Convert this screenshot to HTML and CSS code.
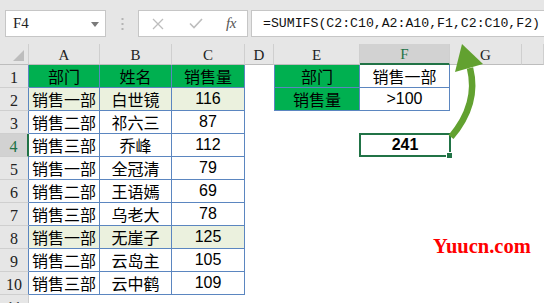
FILE: index.html
```html
<!DOCTYPE html>
<html lang="zh-CN">
<head>
    <meta charset="UTF-8">
    <title>SUMIFS</title>
    <link rel="stylesheet" href="styles.css">
</head>
<body>

    <!-- name box + formula bar -->
    <div class="topbar">
        <div class="name-box">
            <span>F4</span>
            <svg class="caret" width="8" height="5" viewBox="0 0 8 5"><polygon points="0,0 8,0 4,5" fill="#7a7a7a"/></svg>
        </div>
        <svg class="grip" width="3" height="12" viewBox="0 0 3 12">
            <rect x="0.5" y="0" width="2" height="2" fill="#b4b4b4"/>
            <rect x="0.5" y="5" width="2" height="2" fill="#b4b4b4"/>
            <rect x="0.5" y="10" width="2" height="2" fill="#b4b4b4"/>
        </svg>
        <div class="fx-buttons">
            <svg width="12" height="12" viewBox="0 0 12 12"><path d="M1 1L11 11M11 1L1 11" stroke="#bdbdbd" stroke-width="1.3" fill="none"/></svg>
            <svg width="14" height="11" viewBox="0 0 14 11"><path d="M1 5.5L5 9.5L13 1" stroke="#bdbdbd" stroke-width="1.6" fill="none"/></svg>
            <span class="fx">fx</span>
        </div>
        <div class="formula">=SUMIFS(C2:C10,A2:A10,F1,C2:C10,F2)</div>
    </div>

    <div class="sheet">
        <div class="hdr corner"><svg width="11" height="11" viewBox="0 0 11 11"><polygon points="11,0 11,11 0,11" fill="#bdbdbd"/></svg></div>
        <div class="hdr">A</div>
        <div class="hdr">B</div>
        <div class="hdr">C</div>
        <div class="hdr">D</div>
        <div class="hdr">E</div>
        <div class="hdr sel">F</div>
        <div class="hdr">G</div>
        <div class="hdr"></div>

        <div class="rh in">1</div>
        <div class="c t g">部门</div><div class="c t g">姓名</div><div class="c t g">销售量</div>
        <div class="c"></div>
        <div class="c t g edge">部门</div><div class="c t">销售一部</div>
        <div class="c"></div><div class="c"></div>

        <div class="rh in">2</div>
        <div class="c t hl">销售一部</div><div class="c t hl">白世镜</div><div class="c t hl">116</div>
        <div class="c"></div>
        <div class="c t g edge">销售量</div><div class="c t">&gt;100</div>
        <div class="c"></div><div class="c"></div>

        <div class="rh in">3</div>
        <div class="c t">销售二部</div><div class="c t">祁六三</div><div class="c t">87</div>
        <div class="c"></div><div class="c"></div><div class="c"></div><div class="c"></div><div class="c"></div>

        <div class="rh in sel">4</div>
        <div class="c t">销售三部</div><div class="c t">乔峰</div><div class="c t">112</div>
        <div class="c"></div><div class="c"></div>
        <div class="c active">241</div>
        <div class="c"></div><div class="c"></div>

        <div class="rh in">5</div>
        <div class="c t">销售一部</div><div class="c t">全冠清</div><div class="c t">79</div>
        <div class="c"></div><div class="c"></div><div class="c"></div><div class="c"></div><div class="c"></div>

        <div class="rh in">6</div>
        <div class="c t">销售二部</div><div class="c t">王语嫣</div><div class="c t">69</div>
        <div class="c"></div><div class="c"></div><div class="c"></div><div class="c"></div><div class="c"></div>

        <div class="rh in">7</div>
        <div class="c t">销售三部</div><div class="c t">乌老大</div><div class="c t">78</div>
        <div class="c"></div><div class="c"></div><div class="c"></div><div class="c"></div><div class="c"></div>

        <div class="rh in">8</div>
        <div class="c t hl">销售一部</div><div class="c t hl">无崖子</div><div class="c t hl">125</div>
        <div class="c"></div><div class="c"></div><div class="c"></div><div class="c"></div><div class="c"></div>

        <div class="rh in">9</div>
        <div class="c t">销售二部</div><div class="c t">云岛主</div><div class="c t">105</div>
        <div class="c"></div><div class="c"></div><div class="c"></div><div class="c"></div><div class="c"></div>

        <div class="rh in">10</div>
        <div class="c t">销售三部</div><div class="c t">云中鹤</div><div class="c t">109</div>
        <div class="c"></div><div class="c"></div><div class="c"></div><div class="c"></div><div class="c"></div>

        <div class="rh last">11</div>
        <div class="c"></div><div class="c"></div><div class="c"></div><div class="c"></div>
        <div class="c"></div><div class="c"></div><div class="c"></div><div class="c"></div>
    </div>

    <!-- green arrow from F4 up to the formula -->
    <svg class="arrow" width="544" height="303" viewBox="0 0 544 303">
        <path d="M451 137 Q479 104 470 68" stroke="#62a130" stroke-width="6.5" fill="none"/>
        <polygon points="462,44 455,72 483,64" fill="#62a130"/>
    </svg>

    <div class="mark">Yuucn.com</div>

</body>
</html>
```

FILE: styles.css
```css
body {
    margin: 0;
    width: 544px;
    height: 303px;
    overflow: hidden;
    position: relative;
    background-color: #e6e6e6;
    font-family: "Liberation Sans", "Noto Sans CJK SC", sans-serif;
    color: #000;
}

/* formula bar */
.topbar {
    height: 44px;
    box-sizing: border-box;
    padding: 10px 0 7px 5px;
    display: flex;
    align-items: stretch;
}
.name-box {
    width: 101px;
    box-sizing: border-box;
    background: white;
    border: 1px solid #c6c6c6;
    display: flex;
    align-items: center;
    justify-content: space-between;
    padding: 0 6px 0 7px;
    font-family: "Liberation Serif", serif;
    font-size: 15px;
    color: #222;
}
.caret {
    margin-top: 1px;
}
.grip {
    align-self: center;
    margin: 1px 14px 0 15px;
}
.fx-buttons {
    width: 110px;
    box-sizing: border-box;
    background: white;
    border: 1px solid #c6c6c6;
    display: flex;
    align-items: center;
    padding: 0 0 0 13px;
}
.fx-buttons svg:first-child { margin-right: 25px; }
.fx-buttons svg:nth-child(2) { margin-right: 23px; }
.fx {
    font-family: "Liberation Serif", serif;
    font-style: italic;
    font-size: 15px;
    color: #555;
    letter-spacing: -0.5px;
}
.formula {
    flex: 1;
    margin-left: 3px;
    background: white;
    border: 1px solid #c6c6c6;
    border-right: none;
    display: flex;
    align-items: center;
    padding-left: 11px;
    font-family: "Liberation Mono", monospace;
    font-size: 13.2px;
    white-space: nowrap;
    overflow: hidden;
    color: #111;
}

/* grid of cells */
.sheet {
    display: grid;
    grid-template-columns: 29px 71px 72px 73px 29px 86px 90px 72px 1fr;
    grid-template-rows: 21px repeat(11, 23px);
    background: white;
}
.hdr {
    background: #e6e6e6;
    border-right: 1px solid #cfcfcf;
    border-bottom: 1px solid #bdbdbd;
    font-family: "Liberation Serif", serif;
    font-size: 15px;
    color: #222;
    display: flex;
    align-items: flex-end;
    justify-content: center;
    box-sizing: border-box;
}
.hdr.corner {
    justify-content: flex-end;
    padding: 0 4px 3px 0;
}
.hdr.sel {
    background: #d2d2d2;
    color: #217346;
    border-bottom: 2px solid #217346;
}
.rh {
    background: #e6e6e6;
    border-right: 1px solid #cfcfcf;
    border-bottom: 1px solid #cfcfcf;
    font-family: "Liberation Serif", serif;
    font-size: 16px;
    color: #222;
    display: flex;
    align-items: flex-end;
    justify-content: center;
    box-sizing: border-box;
}
.rh.in {
    border-right-color: #5b86c0;
}
.rh.last {
    align-items: flex-start;
    padding-top: 4px;
}
.rh.sel {
    background: #d2d2d2;
    color: #217346;
    border-right: 2px solid #217346;
}
.c {
    box-sizing: border-box;
    display: flex;
    align-items: center;
    justify-content: center;
    font-size: 16px;
    white-space: nowrap;
}
.t {
    border-right: 1px solid #5b86c0;
    border-bottom: 1px solid #5b86c0;
}
.edge {
    border-left: 1px solid #5b86c0;
}
.g { background-color: #00b050; }
.hl { background-color: #ebf1de; }

/* selected cell F4 */
.active {
    position: relative;
    font-weight: bold;
    margin: -1px -1px 0 -1px;
    border: 2px solid #217346;
}
.active::after {
    content: "";
    position: absolute;
    right: -4px;
    bottom: -4px;
    width: 5px;
    height: 5px;
    background: #217346;
    border: 1px solid white;
}

.arrow {
    position: absolute;
    left: 0;
    top: 0;
    pointer-events: none;
}
.mark {
    position: absolute;
    left: 433px;
    top: 235px;
    font-family: "Liberation Serif", serif;
    font-weight: bold;
    font-size: 20.5px;
    color: #ff0000;
}
```
